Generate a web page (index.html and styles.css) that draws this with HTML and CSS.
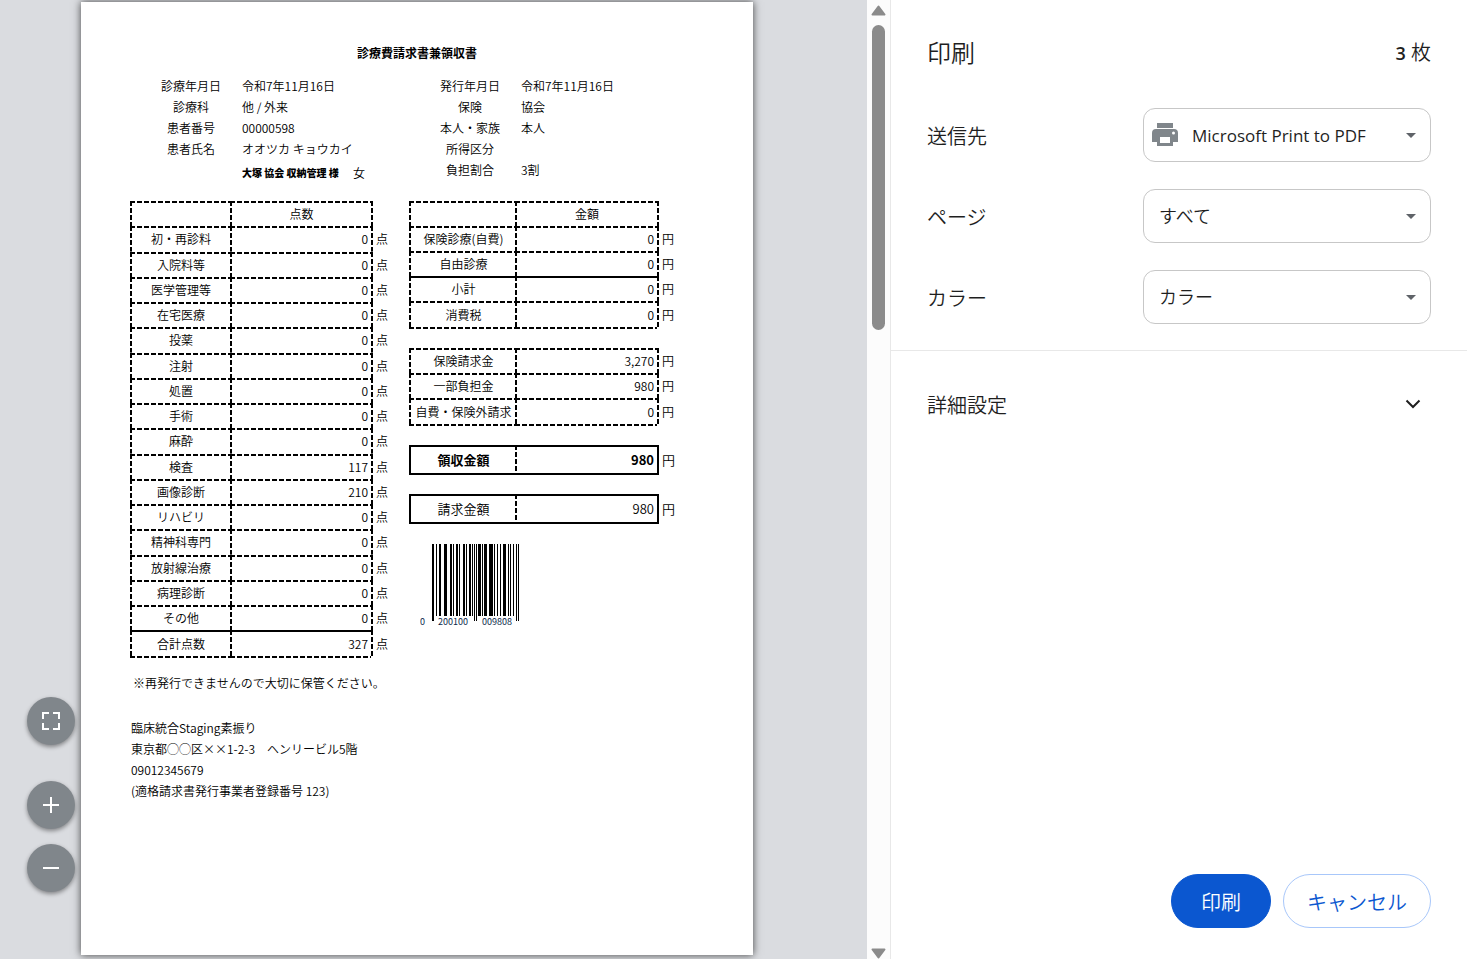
FILE: index.html
```html
<!DOCTYPE html>
<html lang="ja">
  <head>
    <meta charset="UTF-8" />
    <meta name="viewport" content="width=device-width, initial-scale=1.0" />
    <title>印刷</title>
    <link rel="stylesheet" href="styles.css">
  </head>
  <body>
    <main class="preview">
      <article class="paper">
        <h1>診療費請求書兼領収書</h1>

        <div class="columns info">
          <dl>
            <dt>診療年月日</dt>
            <dd>令和7年11月16日</dd>
            <dt>診療科</dt>
            <dd>他 / 外来</dd>
            <dt>患者番号</dt>
            <dd>00000598</dd>
            <dt>患者氏名</dt>
            <dd>オオツカ キョウカイ</dd>
            <dd class="patient"><strong>大塚 協会 収納管理 様</strong><span>女</span></dd>
          </dl>
          <dl>
            <dt>発行年月日</dt>
            <dd>令和7年11月16日</dd>
            <dt>保険</dt>
            <dd>協会</dd>
            <dt>本人・家族</dt>
            <dd>本人</dd>
            <dt>所得区分</dt>
            <dd></dd>
            <dt>負担割合</dt>
            <dd>3割</dd>
          </dl>
        </div>

        <div class="columns">
          <table class="points">
            <tr><th></th><th>点数</th><td class="unit"></td></tr>
            <tr><th>初・再診料</th><td>0</td><td class="unit">点</td></tr>
            <tr><th>入院料等</th><td>0</td><td class="unit">点</td></tr>
            <tr><th>医学管理等</th><td>0</td><td class="unit">点</td></tr>
            <tr><th>在宅医療</th><td>0</td><td class="unit">点</td></tr>
            <tr><th>投薬</th><td>0</td><td class="unit">点</td></tr>
            <tr><th>注射</th><td>0</td><td class="unit">点</td></tr>
            <tr><th>処置</th><td>0</td><td class="unit">点</td></tr>
            <tr><th>手術</th><td>0</td><td class="unit">点</td></tr>
            <tr><th>麻酔</th><td>0</td><td class="unit">点</td></tr>
            <tr><th>検査</th><td>117</td><td class="unit">点</td></tr>
            <tr><th>画像診断</th><td>210</td><td class="unit">点</td></tr>
            <tr><th>リハビリ</th><td>0</td><td class="unit">点</td></tr>
            <tr><th>精神科専門</th><td>0</td><td class="unit">点</td></tr>
            <tr><th>放射線治療</th><td>0</td><td class="unit">点</td></tr>
            <tr><th>病理診断</th><td>0</td><td class="unit">点</td></tr>
            <tr><th>その他</th><td>0</td><td class="unit">点</td></tr>
            <tr class="sum"><th>合計点数</th><td>327</td><td class="unit">点</td></tr>
          </table>

          <div class="amounts">
            <table class="charges">
              <tr><th></th><th>金額</th><td class="unit"></td></tr>
              <tr><th>保険診療(自費)</th><td>0</td><td class="unit">円</td></tr>
              <tr><th>自由診療</th><td>0</td><td class="unit">円</td></tr>
              <tr class="sum"><th>小計</th><td>0</td><td class="unit">円</td></tr>
              <tr><th>消費税</th><td>0</td><td class="unit">円</td></tr>
            </table>
            <table class="claims">
              <tr><th>保険請求金</th><td>3,270</td><td class="unit">円</td></tr>
              <tr><th>一部負担金</th><td>980</td><td class="unit">円</td></tr>
              <tr><th>自費・保険外請求</th><td>0</td><td class="unit">円</td></tr>
            </table>
            <table class="total paid">
              <tr><th>領収金額</th><td>980</td><td class="unit">円</td></tr>
            </table>
            <table class="total">
              <tr><th>請求金額</th><td>980</td><td class="unit">円</td></tr>
            </table>
            <svg class="barcode" width="100" height="84" viewBox="0 0 100 84" role="img" aria-label="0200100009808">
              <path transform="translate(12 1)" shape-rendering="crispEdges" d="M0 0h2v77h-2zM4 0h1v72h-1zM7 0h2v72h-2zM12 0h3v72h-3zM18 0h2v72h-2zM21 0h1v72h-1zM24 0h2v72h-2zM27 0h1v72h-1zM31 0h2v72h-2zM34 0h1v72h-1zM37 0h2v72h-2zM40 0h1v72h-1zM42 0h1v77h-1zM44 0h1v77h-1zM46 0h3v72h-3zM50 0h1v72h-1zM52 0h3v72h-3zM57 0h4v72h-4zM62 0h1v72h-1zM65 0h1v72h-1zM68 0h1v72h-1zM71 0h3v72h-3zM76 0h1v72h-1zM78 0h1v72h-1zM81 0h1v72h-1zM84 0h1v77h-1zM86 0h1v77h-1z" />
              <text x="0" y="82">0</text>
              <text x="18" y="82">200100</text>
              <text x="62" y="82">009808</text>
            </svg>
          </div>
        </div>

        <p class="note">※再発行できませんので大切に保管ください。</p>
        <address>
          臨床統合Staging素振り<br>
          東京都◯◯区××1-2-3　ヘンリービル5階<br>
          09012345679<br>
          (適格請求書発行事業者登録番号 123)
        </address>
      </article>

      <div class="zoom-controls">
        <button type="button" class="fit" aria-label="ページに合わせる">
          <svg width="24" height="24" viewBox="0 0 24 24"><path d="M3 3h7v2H5v5H3zM14 3h7v7h-2V5h-5zM3 14h2v5h5v2H3zM19 14h2v7h-7v-2h5z" /></svg>
        </button>
        <button type="button" aria-label="拡大">
          <svg width="24" height="24" viewBox="0 0 24 24"><path d="M11 4h2v7h7v2h-7v7h-2v-7H4v-2h7z" /></svg>
        </button>
        <button type="button" aria-label="縮小">
          <svg width="24" height="24" viewBox="0 0 24 24"><path d="M4 11h16v2H4z" /></svg>
        </button>
      </div>
    </main>

    <div class="scrollbar" aria-hidden="true">
      <svg width="15" height="11" viewBox="0 0 15 11"><path d="M7.500 1.500L13.500 9.500H1.500z" /></svg>
      <div class="thumb"></div>
      <svg class="down" width="15" height="11" viewBox="0 0 15 11"><path d="M7.500 9.500L13.500 1.500H1.500z" /></svg>
    </div>

    <form class="sidebar">
      <header>
        <h2>印刷</h2>
        <span><b>3</b> 枚</span>
      </header>

      <div class="settings">
        <div class="field destination">
          <label for="destination">送信先</label>
          <div class="select-box">
            <svg class="printer" width="26" height="24" viewBox="0 0 26 24">
              <path fill-rule="evenodd" d="M5 0h16v5H5zM4 6h18a4 4 0 0 1 4 4v9h-5v4H5v-4H0v-9a4 4 0 0 1 4-4zM8 14v6h10v-6zM21.500 8.500a1.500 1.500 0 1 0 0 3a1.500 1.500 0 1 0 0-3z" />
            </svg>
            <select id="destination">
              <option>Microsoft Print to PDF</option>
            </select>
            <svg class="arrow" width="10" height="5" viewBox="0 0 10 5"><path d="M0 0h10L5 5z" /></svg>
          </div>
        </div>
        <div class="field">
          <label for="pages">ページ</label>
          <div class="select-box">
            <select id="pages">
              <option>すべて</option>
            </select>
            <svg class="arrow" width="10" height="5" viewBox="0 0 10 5"><path d="M0 0h10L5 5z" /></svg>
          </div>
        </div>
        <div class="field">
          <label for="color">カラー</label>
          <div class="select-box">
            <select id="color">
              <option>カラー</option>
            </select>
            <svg class="arrow" width="10" height="5" viewBox="0 0 10 5"><path d="M0 0h10L5 5z" /></svg>
          </div>
        </div>
      </div>

      <button type="button" class="more" aria-expanded="false">
        詳細設定
        <svg width="16" height="10" viewBox="0 0 16 10"><path d="M1.500 1.500L8 8L14.500 1.500" /></svg>
      </button>

      <footer>
        <button type="submit" class="print">印刷</button>
        <button type="button" class="cancel">キャンセル</button>
      </footer>
    </form>
  </body>
</html>
```
FILE: styles.css
```css
* {
  box-sizing: border-box;
}
body {
  margin: 0;
  min-height: 100vh;
  display: flex;
  background: #fff;
  color: #1f1f1f;
  font-family: "Open Sans", "Noto Sans CJK JP", sans-serif;
}
h1,
h2,
p,
dl,
dd {
  margin: 0;
}
button,
select {
  font: inherit;
  cursor: pointer;
}

/* preview */
.preview {
  position: relative;
  flex: 1;
  display: flex;
  padding: 2px 114px 4px 81px;
  background: #dadce0;
}
.paper {
  flex: 1;
  padding: 40px 74px 40px 49px;
  background: #fff;
  box-shadow: 0 0 8px rgba(0, 0, 0, 0.7);
  color: #000;
  font-family: "Noto Sans CJK JP", sans-serif;
  font-size: 12px;
  font-weight: 350;
  line-height: 21px;
}
.paper h1 {
  margin: 0 -25px 12px 0;
  font-size: 12px;
  text-align: center;
}
.columns {
  display: grid;
  grid-template-columns: 259fr 270fr;
  column-gap: 20px;
  align-items: start;
}
.info {
  margin-bottom: 15px;
}
.info dl {
  display: grid;
  grid-template-columns: 62px 1fr;
  column-gap: 20px;
  padding-left: 30px;
}
.info dt {
  text-align: center;
}
.info .patient {
  grid-column: 2;
  display: flex;
  gap: 14px;
  line-height: 27px;
}
.patient strong {
  font-size: 10px;
  font-weight: 900;
}

/* ruled tables: each cell draws its own top and left line */
.paper table {
  --dash-x: repeating-linear-gradient(90deg, #000 0 5px, transparent 5px 7px);
  --dash-y: repeating-linear-gradient(#000 0 5px, transparent 5px 7px);
  --solid: linear-gradient(#000, #000);
  --top: var(--dash-x);
  --side: var(--dash-y);
  --bottom: none;
  width: 100%;
  table-layout: fixed;
  border-spacing: 0;
}
.paper th,
.paper td {
  padding: 0 3px 0 2px;
  background-image: var(--top), var(--bottom), var(--side);
  background-position: top, bottom, left;
  background-size: 100% 2px, 100% 2px, 2px 100%;
  background-repeat: no-repeat;
  font-weight: 350;
  text-align: right;
  white-space: nowrap;
}
.paper th {
  padding: 0 0 0 2px;
  text-align: center;
}
.paper th:first-child {
  width: 100px;
}
.paper tr:last-child {
  --bottom: var(--dash-x);
}
.paper .sum {
  --top: var(--solid);
}
.paper .unit {
  --top: none;
  --bottom: none;
  width: 18px;
  padding: 0 0 0 5px;
  text-align: left;
}
.paper tr:last-child > * {
  padding-bottom: 2px;
}
.points {
  height: 457px;
}
.amounts {
  display: grid;
  gap: 19px;
}
.amounts th:first-child {
  width: 106px;
  padding-left: 3px;
}
.amounts .unit {
  width: 22px;
}
.charges {
  height: 128px;
}
.claims {
  height: 78px;
}
.paper .total {
  height: 30px;
  font-size: 13px;
}
.total tr:last-child {
  --top: var(--solid);
  --bottom: var(--solid);
}
.total th,
.total .unit {
  --side: var(--solid);
}
.total td:not(.unit) {
  --side: var(--dash-y);
}
.paper .paid th,
.paper .paid td:not(.unit) {
  font-weight: 700;
}
.barcode {
  margin-left: 11px;
}
.barcode text {
  fill: #0b2a4a;
  font-size: 9px;
  font-weight: 400;
}
.note {
  margin: 14px 0 24px 3px;
}
address {
  padding-left: 1px;
  font-style: normal;
}

.zoom-controls {
  position: absolute;
  left: 27px;
  bottom: 67px;
  display: flex;
  flex-direction: column;
  gap: 15px;
}
.zoom-controls button {
  display: grid;
  place-items: center;
  width: 48px;
  height: 48px;
  padding: 0;
  border: none;
  border-radius: 50%;
  background: #80868b;
  fill: #fff;
  box-shadow: 0 2px 4px rgba(0, 0, 0, 0.4);
}
.zoom-controls .fit {
  margin-bottom: 21px;
}

.scrollbar {
  display: flex;
  flex-direction: column;
  align-items: center;
  gap: 10px;
  width: 23px;
  padding: 5px 0 0;
  background: #fcfcfc;
}
.scrollbar svg {
  fill: #8b8b8b;
  stroke: #8b8b8b;
  stroke-width: 2px;
  stroke-linejoin: round;
}
.thumb {
  width: 13px;
  height: 32%;
  margin-top: -1px;
  border-radius: 7px;
  background: #8b8b8b;
}
.scrollbar .down {
  margin-top: auto;
}

/* settings */
.sidebar {
  display: flex;
  flex-direction: column;
  width: 577px;
  border-left: 1px solid #e8e8e8;
  font-size: 20px;
  font-weight: 350;
}
.sidebar header {
  display: flex;
  align-items: center;
  justify-content: space-between;
  height: 102px;
  padding: 0 36px;
}
.sidebar h2 {
  font-size: 24px;
  font-weight: 350;
}
.sidebar b {
  font-size: 18px;
  font-weight: 600;
}
.settings {
  display: grid;
  gap: 27px;
  padding: 6px 36px 26px;
  border-bottom: 1px solid #e8e8e8;
}
.field {
  display: grid;
  grid-template-columns: 3fr 4fr;
  align-items: center;
}
.select-box {
  display: grid;
  align-items: center;
}
.select-box > * {
  grid-area: 1 / 1;
}
.select-box select {
  appearance: none;
  width: 100%;
  height: 54px;
  padding: 0 40px 0 15px;
  border: 1px solid #c7c7c7;
  border-radius: 12px;
  background: transparent;
  color: #1f1f1f;
  font-size: 18px;
}
.select-box #destination {
  padding-left: 48px;
  font-size: 17px;
  font-weight: 400;
}
.printer {
  margin-left: 9px;
  fill: #80868b;
}
.arrow {
  justify-self: end;
  margin-right: 15px;
  fill: #5f6368;
  pointer-events: none;
}
.more {
  display: flex;
  align-items: center;
  justify-content: space-between;
  height: 106px;
  padding: 0 46px 0 36px;
  border: none;
  background: none;
  color: #1f1f1f;
}
.more svg {
  fill: none;
  stroke: #1f1f1f;
  stroke-width: 2px;
}
.sidebar footer {
  display: flex;
  justify-content: flex-end;
  gap: 12px;
  margin-top: auto;
  padding: 0 36px 31px;
}
.sidebar footer button {
  height: 54px;
  padding: 0 23px;
  border: 1px solid #a8c7fa;
  border-radius: 27px;
  background: #fff;
  color: #0b57d0;
}
.sidebar footer .print {
  padding: 0 29px;
  border-color: #0b57d0;
  background: #0b57d0;
  color: #fff;
}
```
